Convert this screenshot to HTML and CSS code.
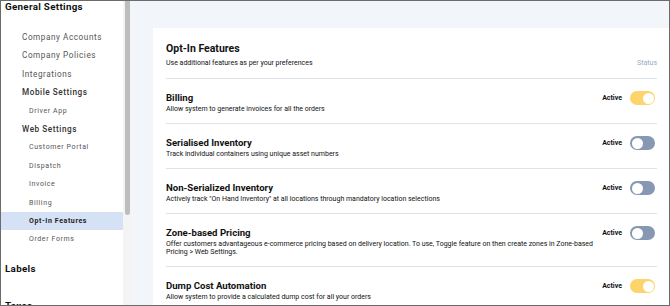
FILE: index.html
```html
<!DOCTYPE html>
<html lang="en">
<head>
  <meta charset="UTF-8">
  <title>Opt-In Features</title>
  <link rel="stylesheet" href="styles.css">
</head>
<body>
  <div class="frame">
    <aside class="sidebar">
      <div class="group">
        <div class="group-title">General Settings</div>
        <ul class="nav">
          <li>Company Accounts</li>
          <li>Company Policies</li>
          <li>Integrations</li>
          <li class="parent">Mobile Settings</li>
          <li class="sub">Driver App</li>
          <li class="parent">Web Settings</li>
          <li class="sub">Customer Portal</li>
          <li class="sub">Dispatch</li>
          <li class="sub">Invoice</li>
          <li class="sub">Billing</li>
          <li class="sub active">Opt-In Features</li>
          <li class="sub">Order Forms</li>
        </ul>
      </div>
      <div class="group">
        <div class="group-title">Labels</div>
      </div>
      <div class="group">
        <div class="group-title">Taxes</div>
      </div>
    </aside>
    <div class="scrollbar"><div class="thumb"></div></div>

    <main class="main">
      <section class="card">
        <header class="card-head">
          <div>
            <h1>Opt-In Features</h1>
            <p>Use additional features as per your preferences</p>
          </div>
          <span class="status">Status</span>
        </header>

        <div class="feature">
          <div class="info">
            <h2>Billing</h2>
            <p>Allow system to generate invoices for all the orders</p>
          </div>
          <div class="state">Active <span class="toggle on"></span></div>
        </div>

        <div class="feature">
          <div class="info">
            <h2>Serialised Inventory</h2>
            <p>Track individual containers using unique asset numbers</p>
          </div>
          <div class="state">Active <span class="toggle"></span></div>
        </div>

        <div class="feature">
          <div class="info">
            <h2>Non-Serialized Inventory</h2>
            <p>Actively track "On Hand Inventory" at all locations through mandatory location selections</p>
          </div>
          <div class="state">Active <span class="toggle"></span></div>
        </div>

        <div class="feature">
          <div class="info">
            <h2>Zone-based Pricing</h2>
            <p>Offer customers advantageous e-commerce pricing based on delivery location. To use, Toggle feature on then create zones in Zone-based Pricing &gt; Web Settings.</p>
          </div>
          <div class="state">Active <span class="toggle"></span></div>
        </div>

        <div class="feature">
          <div class="info">
            <h2>Dump Cost Automation</h2>
            <p>Allow system to provide a calculated dump cost for all your orders</p>
          </div>
          <div class="state">Active <span class="toggle on"></span></div>
        </div>
      </section>
    </main>
  </div>
</body>
</html>
```

FILE: styles.css
```css
* {
  box-sizing: border-box;
}
body {
  margin: 0;
  font-family: Roboto, "Liberation Sans", sans-serif;
  color: #111;
}
.frame {
  width: 670px;
  height: 306px;
  border: 1px solid #6b6b6b;
  display: flex;
  overflow: hidden;
}

/* sidebar */
.sidebar {
  width: 122px;
  flex-shrink: 0;
  background: #fff;
}
.group-title {
  font-size: 9.8px;
  font-weight: 700;
  letter-spacing: 0.3px;
  padding-left: 4px;
  line-height: 12px;
  color: #111;
}
.group + .group {
  margin-top: 14px;
}
.group + .group + .group {
  margin-top: 25px;
}
.nav {
  list-style: none;
  margin: 15px 0 0;
  padding: 0;
}
.nav li {
  font-size: 8.2px;
  letter-spacing: 0.55px;
  color: #555;
  line-height: 18.4px;
  padding-left: 21px;
}
.nav li.parent {
  color: #333;
  font-weight: 500;
}
.nav li.sub {
  font-size: 7px;
  letter-spacing: 0.6px;
  padding-left: 28px;
}
.nav li.active {
  background: #d5e1f5;
  color: #222;
  font-weight: 700;
}

.scrollbar {
  width: 8px;
  flex-shrink: 0;
  background: #f4f4f4;
  padding-left: 2px;
}
.thumb {
  width: 5px;
  height: 214px;
  background: #bdbdbd;
  border-radius: 0 0 3px 3px;
}

/* main */
.main {
  flex: 1;
  background: #f2f5fa;
  padding: 27px 0 0 22px;
}
.card {
  background: #fff;
  height: 100%;
  padding: 14px 12px 0 13px;
}
.card-head {
  display: flex;
  justify-content: space-between;
  align-items: flex-end;
  padding-bottom: 10px;
  border-bottom: 1px solid #dde3eb;
}
.card-head h1 {
  margin: 0;
  font-size: 10.5px;
  line-height: 14px;
}
.card-head p {
  margin: 3px 0 0;
  font-size: 7px;
  line-height: 9px;
}
.status {
  font-size: 7px;
  line-height: 9px;
  color: #9aaac4;
}

.feature {
  display: flex;
  justify-content: space-between;
  align-items: flex-start;
  padding: 13px 0 10px;
  border-bottom: 1px solid #dde3eb;
}
.feature h2 {
  margin: 0;
  font-size: 9.6px;
  line-height: 12px;
}
.feature p {
  margin: 1px 0 0;
  font-size: 7px;
  line-height: 8px;
  max-width: 430px;
}
.state {
  display: flex;
  align-items: center;
  gap: 8px;
  font-size: 7px;
  font-weight: 700;
  padding-right: 2px;
  margin-top: -1px;
  white-space: nowrap;
}
.toggle {
  width: 25px;
  height: 14px;
  border-radius: 7px;
  background: #8798b3;
  padding: 1.5px;
  display: flex;
}
.toggle::after {
  content: "";
  width: 11px;
  height: 11px;
  border-radius: 50%;
  background: #fff;
}
.toggle.on {
  background: #fcd46a;
  justify-content: flex-end;
}
```
